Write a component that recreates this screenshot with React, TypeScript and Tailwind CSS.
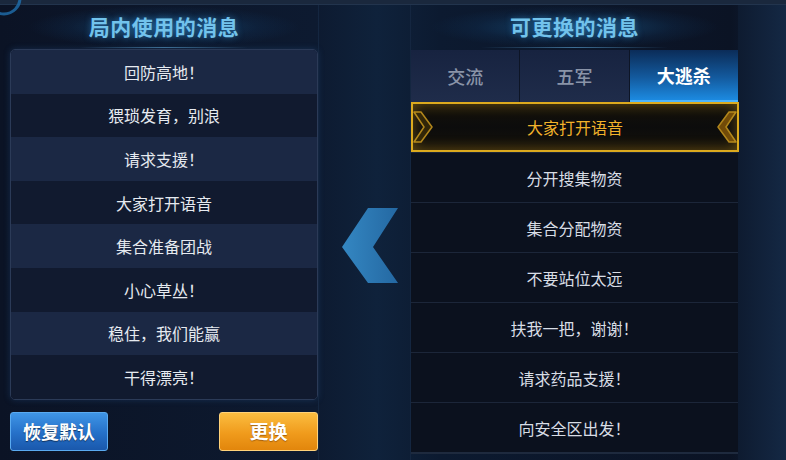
import React from 'react';

// ============================================
// DATA
// ============================================

const IN_GAME = [
  '回防高地！',
  '猥琐发育，别浪',
  '请求支援！',
  '大家打开语音',
  '集合准备团战',
  '小心草丛！',
  '稳住，我们能赢',
  '干得漂亮！',
];

const TABS = ['交流', '五军', '大逃杀'];

const SWAPPABLE = [
  '大家打开语音',
  '分开搜集物资',
  '集合分配物资',
  '不要站位太远',
  '扶我一把，谢谢！',
  '请求药品支援！',
  '向安全区出发！',
];

// ============================================
// PIECES
// ============================================

function PanelTitle({ text }: { text: string }) {
  return (
    <div className="relative h-[44px] flex items-center justify-center bg-[radial-gradient(ellipse_55%_60%_at_center,rgba(28,104,160,0.55)_0%,rgba(18,64,110,0.2)_55%,transparent_80%)]">
      <span className="text-[21px] font-bold tracking-[0.5px] text-[#72c3ec] [text-shadow:0_0_6px_rgba(60,160,230,0.5)]">
        {text}
      </span>
      <div className="absolute bottom-[1px] left-[70px] right-[70px] h-px bg-[linear-gradient(90deg,transparent,#3d6f96,transparent)]" />
    </div>
  );
}

// gold bracket drawn on the edges of the selected row
function Chevron({ side }: { side: 'left' | 'right' }) {
  const points = side === 'left' ? '1,1 8,1 19,16 8,31 1,31 11,16' : '19,1 12,1 1,16 12,31 19,31 9,16';
  return (
    <svg width="20" height="32" viewBox="0 0 20 32" className={`absolute top-[7px] ${side === 'left' ? 'left-0' : 'right-0'}`}>
      <polygon
        points={points}
        fill={side === 'left' ? '#3a2c08' : '#8a5a08'}
        stroke="#d9a420"
        strokeWidth="1.5"
        strokeLinejoin="round"
        opacity="0.8"
      />
    </svg>
  );
}

// ============================================
// PAGE
// ============================================

export default function App() {
  return (
    <div className="relative w-[786px] h-[460px] overflow-hidden flex flex-col bg-[linear-gradient(90deg,#0b1325_0%,#0d1a30_40%,#0f223b_48%,#0c1a30_56%,#0b1324_93%,#13253f_100%)] font-['Noto_Sans_CJK_SC','Noto_Sans',sans-serif]">
      {/* top strip */}
      <div className="h-[5px] bg-[#1a283d] border-b border-[#22344d]" />
      <svg width="40" height="30" viewBox="0 0 40 30" className="absolute left-0 top-0">
        <circle cx="4" cy="-2" r="16" fill="none" stroke="#1f6fae" strokeWidth="3" opacity="0.8" />
      </svg>

      <div className="flex flex-1">
        {/* left: in-game messages */}
        <div className="w-[318px] pl-[10px] flex flex-col">
          <PanelTitle text="局内使用的消息" />
          <div className="rounded-[5px] border border-[#2b3a57] overflow-hidden shadow-[0_0_6px_rgba(40,90,150,0.35)]">
            {IN_GAME.map((msg, i) => (
              <div
                key={msg}
                className={`h-[43.6px] flex items-center justify-center text-[16px] text-[#e6eaf0] ${
                  i % 2 === 0 ? 'bg-[#1b2844]' : 'bg-[#111a2f]'
                }`}
              >
                {msg}
              </div>
            ))}
          </div>
          <div className="mt-[12px] flex justify-between">
            <button className="w-[98px] h-[39px] rounded-[3px] border border-[#5aaaf0] bg-[linear-gradient(180deg,#3f95e6_0%,#2570c8_55%,#1a58ac_100%)] text-[18px] font-bold text-white [text-shadow:0_1px_1px_rgba(0,0,0,0.5)]">
              恢复默认
            </button>
            <button className="w-[99px] h-[39px] rounded-[3px] border border-[#ffd27a] bg-[linear-gradient(180deg,#fbbd40_0%,#f09b1c_55%,#e2860c_100%)] text-[19px] font-bold text-white [text-shadow:0_1px_1px_rgba(120,60,0,0.6)]">
              更换
            </button>
          </div>
        </div>

        {/* middle arrow */}
        <div className="w-[93px] pt-[203px] pl-[23px] border-x border-[#142640]">
          <svg width="56" height="75" viewBox="0 0 56 75">
            <defs>
              <linearGradient id="arrow" x1="0" y1="0" x2="1" y2="0">
                <stop offset="0" stopColor="#3487c2" />
                <stop offset="1" stopColor="#2468a2" />
              </linearGradient>
            </defs>
            <polygon points="26,0 56,0 31,39 56,75 26,75 0,39" fill="url(#arrow)" />
          </svg>
        </div>

        {/* right: swappable messages */}
        <div className="w-[327px] flex flex-col">
          <PanelTitle text="可更换的消息" />
          <div className="mt-[1px] h-[52px] flex bg-[#0d1526]">
            {TABS.map((tab, i) => {
              const active = i === TABS.length - 1;
              return (
                <div
                  key={tab}
                  className={`flex-1 flex items-center justify-center text-[18px] ${
                    active
                      ? 'bg-[linear-gradient(180deg,#0b2c58_0%,#135a9e_55%,#1c8ae0_100%)] text-white font-bold border-b-2 border-[#4ab4ff]'
                      : 'bg-[linear-gradient(180deg,#172340_0%,#1f2c4a_100%)] text-[#8a94a8] font-medium'
                  } ${i > 0 ? 'ml-px' : ''}`}
                >
                  {tab}
                </div>
              );
            })}
          </div>
          <div className="bg-[#0b111e] border-b-2 border-[#1e2a3e]">
            {SWAPPABLE.map((msg, i) =>
              i === 0 ? (
                <div
                  key={msg}
                  className="relative h-[50px] flex items-center justify-center border-2 border-[#dcaa1e] bg-[linear-gradient(180deg,#15120a_0%,#0c0c0c_50%,#15120a_100%)] shadow-[inset_0_0_14px_rgba(230,170,30,0.4)] text-[16px] text-[#f2b22a] -mr-px"
                >
                  <Chevron side="left" />
                  {msg}
                  <Chevron side="right" />
                </div>
              ) : (
                <div
                  key={msg}
                  className="h-[50px] flex items-center justify-center border-t border-[#1c2639] text-[16px] text-[#d8dde5]"
                >
                  {msg}
                </div>
              )
            )}
          </div>
        </div>

        {/* far right edge */}
        <div className="flex-1 bg-[linear-gradient(90deg,#0e1b30,#142844)]" />
      </div>
    </div>
  );
}
